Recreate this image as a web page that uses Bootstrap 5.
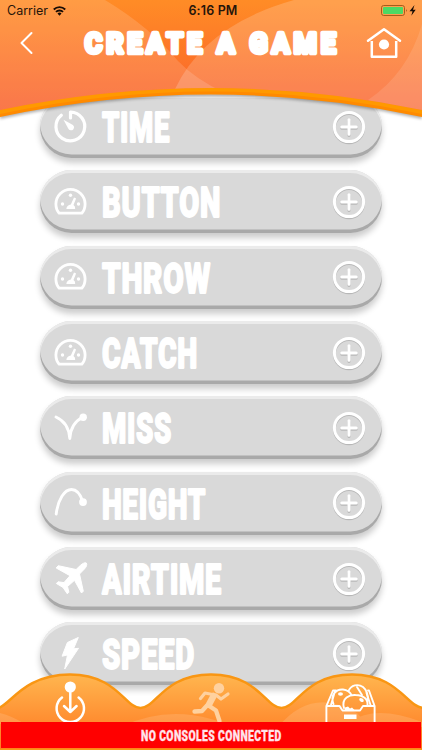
<!DOCTYPE html>
<html lang="en">
<head>
<meta charset="utf-8">
<meta name="viewport" content="width=device-width, initial-scale=1">
<title>Create a Game</title>
<link href="https://cdn.jsdelivr.net/npm/bootstrap@5.3.0/dist/css/bootstrap.min.css" rel="stylesheet">
<style>
body{font-family:Inter,"Liberation Sans",sans-serif}
.screen{width:422px;height:750px;background:#fff}
.top-bar{height:124px;z-index:3}
.top-bar>svg,.dock>svg{z-index:-1}
.status{height:22px;padding-left:7px;font-size:12.5px;color:#26150a;line-height:22px}
.status .clock{font-weight:600;letter-spacing:.15px;padding-left:4px}
.heading-row{height:44px}
.events{padding:95px 40px 0;gap:12.35px}
.pill{height:63px;flex:none;border-radius:32px;background:#d9d9d9;
 box-shadow:inset 0 3px 0 #ebebeb,inset 0 -3.5px 0 #a9a9a9,0 5px 6px rgba(0,0,0,.2)}
.pill svg{display:block;overflow:visible}
.label-text{font-family:Roboto,"Liberation Sans",sans-serif;font-weight:900;font-size:42px;letter-spacing:1px;fill:#fff;stroke:#fff;stroke-width:1.8;stroke-linejoin:bevel}
.title-text{font-family:Roboto,"Liberation Sans",sans-serif;font-weight:700;font-size:27.5px;letter-spacing:4.5px;fill:#fff;stroke:#fff;stroke-width:4.6;stroke-linejoin:round}
.dock{height:80px;z-index:3}
.alert-strip{margin:0 1px 2px;height:26px;background:#f00}
.alert-strip svg{overflow:visible}
.alert-text{font-family:Roboto,"Liberation Sans",sans-serif;font-weight:900;font-size:14.8px;letter-spacing:.5px;fill:#ffe4ec;stroke:#ffe4ec;stroke-width:.3}
.ln{fill:none;stroke:#fff;stroke-linecap:round;stroke-linejoin:round}
.runner{stroke:#ffd19f}
.plus-shade{filter:brightness(0)}
</style>
<script src="https://cdn.jsdelivr.net/npm/bootstrap@5.3.0/dist/js/bootstrap.bundle.min.js"></script>
</head>
<body class="m-0 overflow-hidden">
<svg class="d-none">
<symbol id="i-time" viewBox="0 0 36 36"><path class="ln" stroke-width="3.200" d="M8.800 6.800A14.400 14.400 0 1 0 18 3.600V9.500"/><path fill="#fff" d="M11 11.300 20 16.200a3 3 0 1 1-4 4.200z"/></symbol>
<symbol id="i-gauge" viewBox="0 0 36 36"><path class="ln" stroke-width="2.800" d="M6.700 29.700C3.800 26.500 3.400 23.400 3.400 20.500a14.600 14.600 0 0 1 29.200 0c0 2.900-.4 6-3.300 9.200z"/><g fill="#fff"><circle cx="18" cy="11.800" r="1.700"/><circle cx="10" cy="20.500" r="1.700"/><circle cx="26" cy="20.500" r="1.700"/><path d="M21.500 14.100 23.600 15.100 21 21.500q1.900 1 1.700 4H13.800q.5-4 4.500-4.600z"/></g></symbol>
<symbol id="i-miss" viewBox="0 0 36 36"><path class="ln" stroke-width="2.900" d="M3.500 7.500C11.500 11 16.500 18 17.300 29 18 19 23 11.300 30 8"/><circle cx="30.700" cy="7.700" r="3.700" fill="#fff"/></symbol>
<symbol id="i-height" viewBox="0 0 36 36"><path class="ln" stroke-width="2.900" d="M3.700 29.500C5.500 15 12 5 19 5c5 0 9 5 11.300 12"/><circle cx="30.500" cy="17.600" r="3.900" fill="#fff"/></symbol>
<symbol id="i-air" viewBox="0 0 36 36"><path fill="#fff" stroke="#fff" stroke-width="1" stroke-linejoin="round" d="M33.800 2.500c1.200 1.400-.1 4.200-1.800 5.900l-5 5.100 3.800 17.200-1.800 1.800-7-12.700-7 6.200 1.400 5.700-1.600 1.600-4.300-6.400-6.600-3.900 1.600-1.700 6 .8 6-6.900L3.700 7.500l2-2.300L23.600 9l4.700-4.500c1.900-1.700 4.400-2.800 5.500-2z"/></symbol>
<symbol id="i-speed" viewBox="0 0 36 36"><path fill="#fff" stroke="#fff" stroke-width="1" stroke-linejoin="round" d="M25.800 2 14.900 7 9.600 20.700l5.400-1.200-2.800 14L26 12.800 21 13.300z"/></symbol>
<symbol id="i-plus" viewBox="0 0 36 36"><g class="ln" stroke-width="3"><circle cx="18" cy="18" r="14.600"/><path d="M18 10.800v14.400M10.800 18h14.400"/></g></symbol>
</svg>

<main class="screen position-relative overflow-hidden">
 <section class="events d-flex flex-column" id="events"></section>

 <header class="top-bar position-absolute top-0 start-0 w-100">
  <svg class="position-absolute top-0 start-0" width="422" height="124" viewBox="0 0 422 124">
   <defs><linearGradient id="hg" gradientUnits="userSpaceOnUse" x1="0" y1="0" x2="0" y2="112"><stop stop-color="#ff8c26"/><stop offset=".5" stop-color="#fd7628"/><stop offset="1" stop-color="#f9602e"/></linearGradient>
   <clipPath id="hc"><path d="M0 0H422V110Q211 66 0 110z"/></clipPath>
   <filter id="sh" x="-5%" width="110%" height="130%"><feGaussianBlur stdDeviation="1.500"/></filter></defs>
   <path d="M0 0H422V119Q211 73 0 119z" opacity=".3" filter="url(#sh)"/>
   <path d="M0 0H422V117Q211 72 0 117z" fill="#ff8a00"/>
   <path d="M0 0H422V114Q211 69 0 114z" fill="#ff9900"/>
   <g clip-path="url(#hc)"><path fill="url(#hg)" d="M0 0H422V120H0z"/>
    <path fill="#fff" opacity=".14" d="M0 0H105Q150 27 178 61 195 79 225 93L0 130z"/>
    <path fill="#fff" opacity=".18" d="M294 0Q205 25 175 89L260 110 422 124V0z"/>
    <path fill="#fff" opacity=".11" d="M422 24Q408 73 368 100L422 124z"/></g>
  </svg>
  <div class="status d-flex position-relative justify-content-between">
   <div class="d-flex align-items-center">
    <span>Carrier</span>
    <svg class="ms-1" width="15" height="12" viewBox="0 0 17 13"><g fill="none" stroke="#180c04" stroke-width="2.100"><path d="M2 4.800a9.300 9.300 0 0 1 13 0M4.500 7.600a5.600 5.600 0 0 1 8 0"/></g><path fill="#180c04" d="M6.200 9.400a3.200 3.200 0 0 1 4.600 0L8.500 11.800z"/></svg>
   </div>
   <span class="clock position-absolute start-50 translate-middle-x text-nowrap">6:16 PM</span>
   <svg width="42" height="22" viewBox="0 0 42 22"><rect x="1.500" y="5.500" width="23" height="10" rx="2.200" fill="none" stroke="#a55d1c"/><rect x="3" y="7" width="20" height="7" rx="1" fill="#4cd964"/><path d="M26 9q1.600 1.500 0 3z" fill="#8c4c16"/><path d="M34.500 5 29.500 11.300h3l-1.200 4.400 4.400-6h-2.700z" fill="#180c04"/></svg>
  </div>
  <div class="heading-row d-flex align-items-center justify-content-between">
   <svg width="60" height="44"><path class="ln" stroke-width="2" d="M31.500 11 21.500 21l10 10"/></svg>
   <svg width="300" height="44"><text class="title-text" x="25" y="30.700" textLength="255" lengthAdjust="spacingAndGlyphs">CREATE A GAME</text></svg>
   <svg width="62" height="44"><g class="ln" stroke-width="2.500"><path d="M8 18.800 24 7.300 40 18.800"/><path stroke-linecap="butt" d="M11.800 19V34.700H36.200V19"/></g><circle cx="24" cy="22.500" r="5.100" fill="#fff"/></svg>
  </div>
 </header>

 <footer class="dock position-absolute bottom-0 start-0 w-100 d-flex flex-column justify-content-end">
  <svg class="position-absolute top-0 start-0" width="422" height="80" viewBox="0 0 422 80">
   <defs><linearGradient id="dg" x2="0" y2="1"><stop stop-color="#ffb64f"/><stop offset=".65" stop-color="#ff8b2f"/><stop offset="1" stop-color="#ff7a20"/></linearGradient>
   <clipPath id="dc"><path d="M-2 38C10 36 23 4.500 70 4.500S125 38 140.500 38 164 4.500 211 4.500 266 38 281.500 38 305 4.500 352 4.500 407 38 424 38V80H-2z"/></clipPath></defs>
   <path fill="url(#dg)" stroke="#f99613" stroke-width="2.500" d="M-2 38C10 36 23 4.500 70 4.500S125 38 140.500 38 164 4.500 211 4.500 266 38 281.500 38 305 4.500 352 4.500 407 38 424 38V80H-2z"/>
   <g clip-path="url(#dc)" fill="#fff" opacity=".13"><path d="M0 43Q12 46 25 54H0zM120 57Q165 36 211 49L240 57zM278 57Q312 16 357 43L370 57zM350 52Q375 34 422 52V57H350z"/></g>
   <g class="ln" stroke-width="2.500"><path d="M70.300 18V42M64 36l6.300 6 6.300-6"/><path d="M62 27.500a13.700 13.700 0 1 0 16.600 0"/></g><circle cx="70.300" cy="17" r="5.600" fill="#fff"/>
   <g class="ln"><g class="runner" stroke-width="4.300"><path d="M208.500 35.500 216 40.500 219.500 51M207 35.500 202 41 194.500 41.500"/><path stroke-width="3.200" d="M212.500 24.500 205 23 200.500 28.500M216 25 221 29 228 24"/><path stroke-width="6.500" d="M213.500 26 209 34.500"/></g></g><circle cx="219" cy="18.300" r="5.200" fill="#ffd19f"/>
   <g class="ln" stroke-width="1.900"><path d="M326.400 53V36L333 20.500H336M368 20.500H369L374.600 36V53M326.400 36H339.500L342.500 40.500H360L363 36H374.600"/><path d="M331 35 335 21M370.500 35 366.500 23M333.500 34C330 25 336 19 343 19.500 347 20 350 22 351.500 25"/><path d="M344 38C341 28 350 24.500 355.500 25 364 25.500 368 29 367.500 35"/><path d="M348.500 21C351 15 358 13.500 363 17 367 20 368.500 26 367.500 31M357 17l5 8"/></g>
   <g fill="#fff"><path d="M344 44.500h12.500v4.500H344z"/><ellipse cx="340.500" cy="24" rx="2.500" ry="1.700"/><ellipse cx="361.500" cy="30" rx="2.500" ry="1.700" transform="rotate(35 361.500 30)"/><path d="M345 40.500h10l-3-3-2 1-2-2-3 1z"/></g>
  </svg>
  <div class="alert-strip d-flex justify-content-center align-items-center">
   <svg width="150" height="24"><text class="alert-text" x="5" y="17.500" textLength="140.500" lengthAdjust="spacingAndGlyphs">NO CONSOLES CONNECTED</text></svg>
  </div>
 </footer>
</main>
<script>
const rows=[["time","TIME",68],["gauge","BUTTON",119],["gauge","THROW",109],["gauge","CATCH",96],["miss","MISS",70],["height","HEIGHT",104],["air","AIRTIME",120],["speed","SPEED",93]];
document.getElementById("events").innerHTML=rows.map(([icon,name,w])=>`
<div class="pill d-flex align-items-center">
 <svg class="ms-2" width="36" height="36" viewBox="-4.500 0.500 36 36"><use href="#i-${icon}" width="36" height="36"/></svg>
 <svg class="ms-3" width="150" height="63"><text class="label-text" x="2" y="47.300" textLength="${w}" lengthAdjust="spacingAndGlyphs">${name}</text></svg>
 <svg class="ms-auto me-3" width="35" height="36"><use href="#i-plus" y="1.200" width="36" height="36" opacity=".15" class="plus-shade"/><use href="#i-plus" width="36" height="36"/></svg>
</div>`).join("");
</script>
</body>
</html>
